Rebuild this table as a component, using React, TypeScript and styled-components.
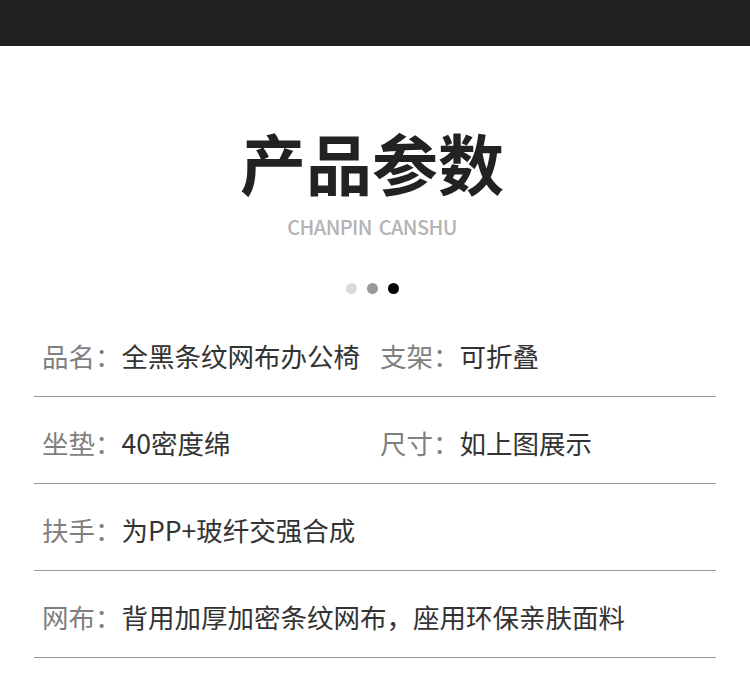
import React from 'react';
import styled, { createGlobalStyle } from 'styled-components';

const GlobalStyle = createGlobalStyle`
  html, body {
    margin: 0;
    padding: 0;
    background: #ffffff;
  }
  body {
    font-family: "Noto Sans CJK SC", "Noto Sans", sans-serif;
  }
`;

const Page = styled.div`
  width: 750px;
  min-height: 680px;
  background: #ffffff;
  overflow: hidden;
`;

const TopBar = styled.div`
  height: 46px;
  background: #212121;
`;

const Header = styled.header`
  display: flex;
  flex-direction: column;
  align-items: center;
  padding: 82px 6px 0 0;
`;

const Title = styled.h1`
  margin: 0;
  font-size: 66px;
  line-height: 66px;
  font-weight: 700;
  color: #222222;
`;

const Subtitle = styled.div`
  margin-top: 21px;
  font-size: 20px;
  line-height: 24px;
  font-weight: 500;
  letter-spacing: -0.6px;
  word-spacing: 3px;
  color: #b3b3b3;
`;

const Dots = styled.div`
  display: flex;
  gap: 10px;
  margin-top: 44px;
`;

const Dot = styled.span<{ $tone: string }>`
  width: 11px;
  height: 11px;
  border-radius: 50%;
  background: ${(p) => p.$tone};
`;

const Table = styled.div`
  margin: 16px 34px 0;
`;

const Row = styled.div`
  display: grid;
  grid-template-columns: 338px 1fr;
  padding: 32px 8px 26px;
  border-bottom: 1px solid #999999;
`;

const Cell = styled.div`
  font-size: 26.5px;
  line-height: 28px;
  white-space: nowrap;
`;

const Label = styled.span`
  color: #7f7f7f;
`;

const Value = styled.span`
  color: #333333;
`;

const rows: [string, string][][] = [
  [
    ['品名：', '全黑条纹网布办公椅'],
    ['支架：', '可折叠'],
  ],
  [
    ['坐垫：', '40密度绵'],
    ['尺寸：', '如上图展示'],
  ],
  [['扶手：', '为PP+玻纤交强合成']],
  [['网布：', '背用加厚加密条纹网布，座用环保亲肤面料']],
];

export default function App() {
  return (
    <Page>
      <GlobalStyle />
      <TopBar />
      <Header>
        <Title>产品参数</Title>
        <Subtitle>CHANPIN CANSHU</Subtitle>
        <Dots>
          <Dot $tone="#dadada" />
          <Dot $tone="#999999" />
          <Dot $tone="#000000" />
        </Dots>
      </Header>
      <Table>
        {rows.map((cells, i) => (
          <Row key={i}>
            {cells.map(([label, value]) => (
              <Cell key={label}>
                <Label>{label}</Label>
                <Value>{value}</Value>
              </Cell>
            ))}
          </Row>
        ))}
      </Table>
    </Page>
  );
}
